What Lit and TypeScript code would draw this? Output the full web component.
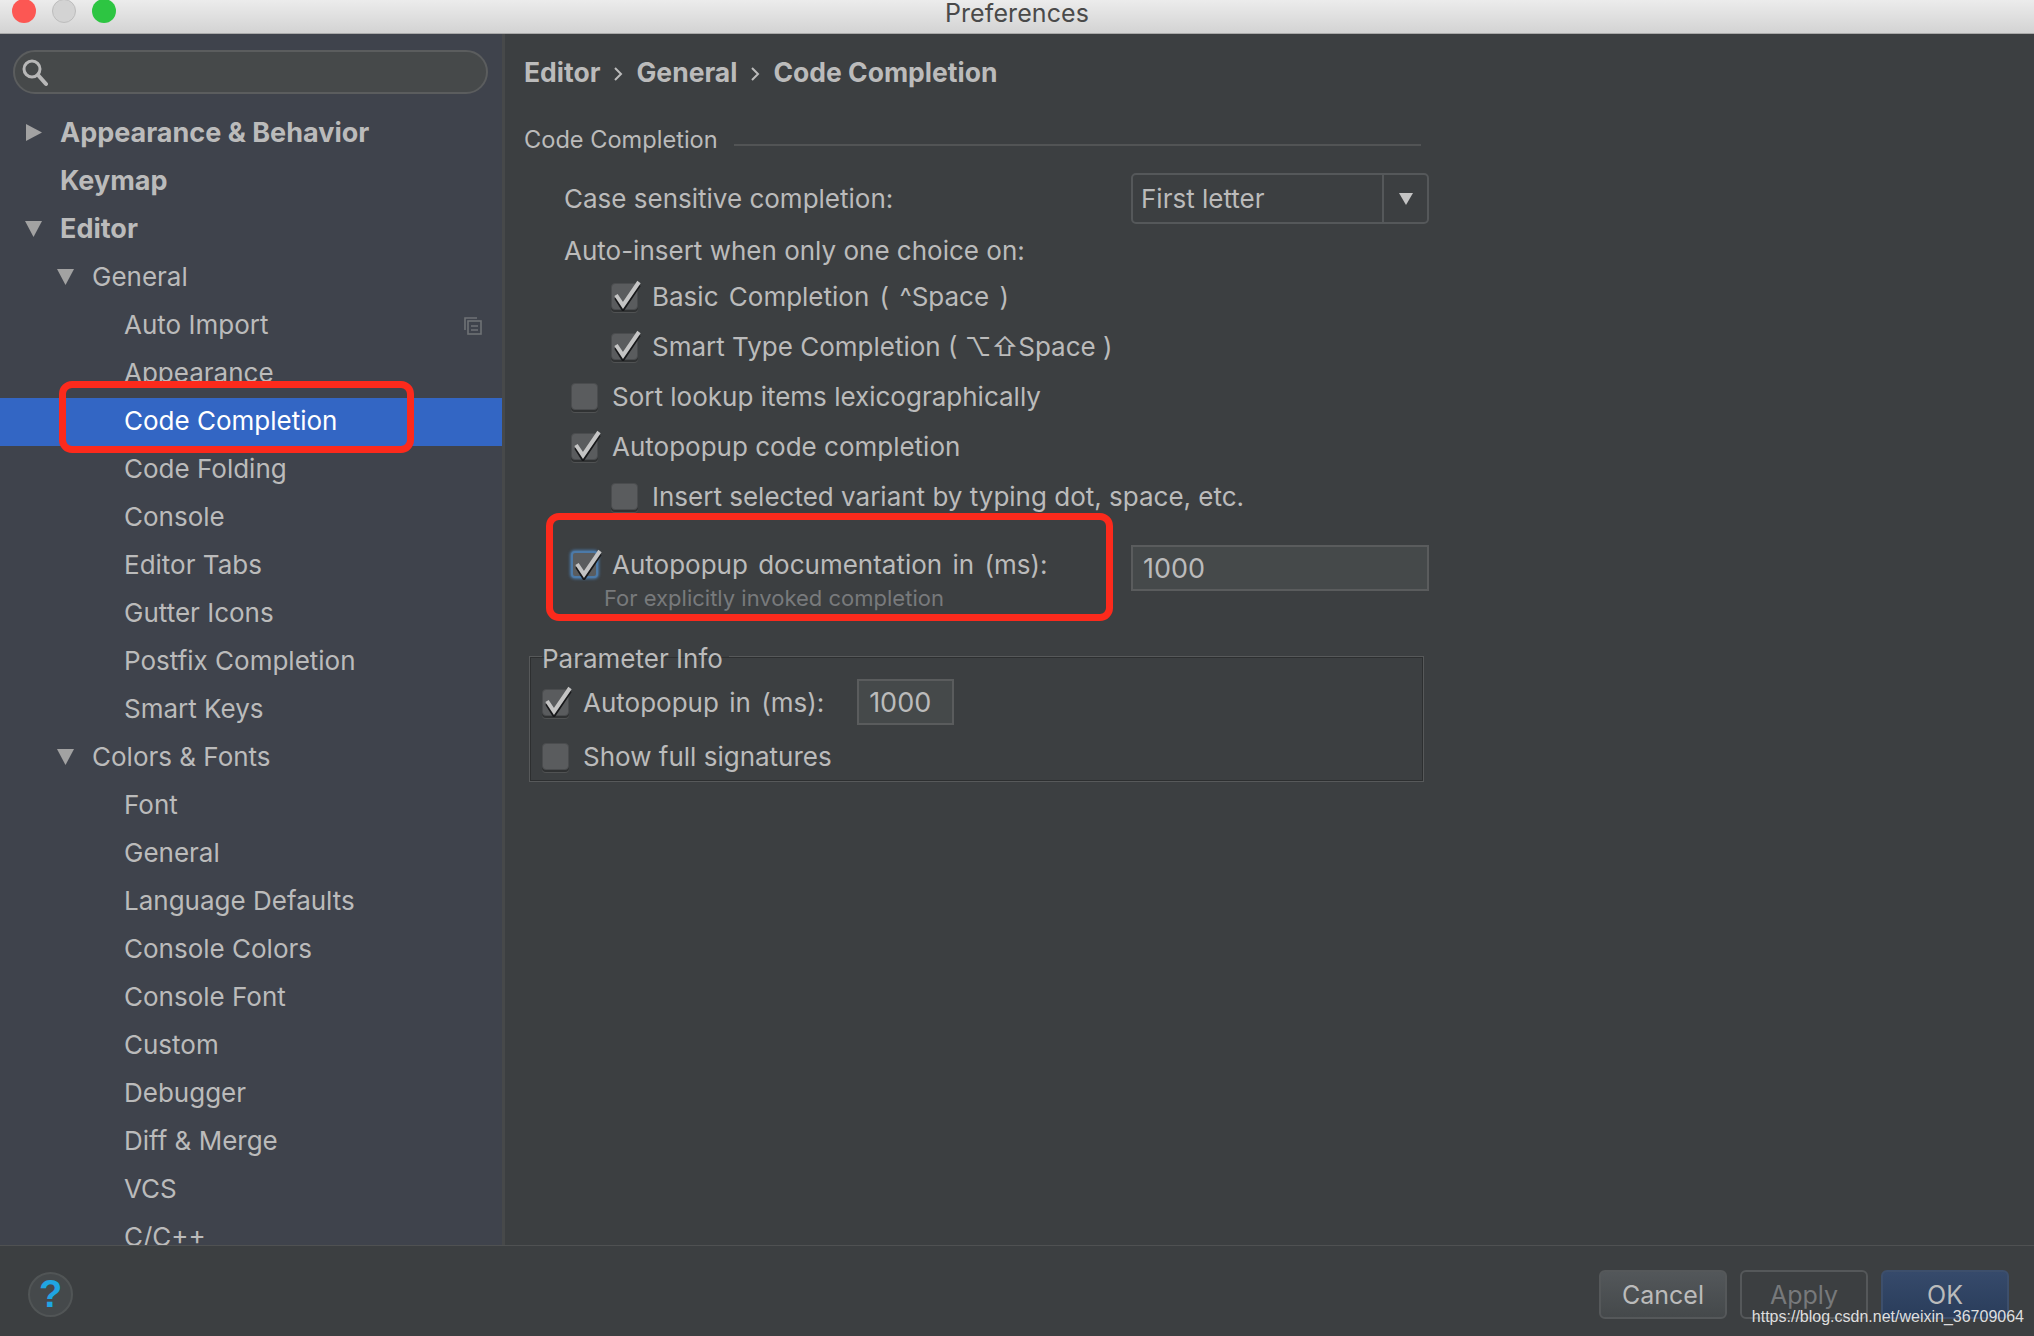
import { LitElement, html, css, svg } from "lit";
import { customElement } from "lit/decorators.js";

type Row = { t: string; lvl: number; arrow?: "r" | "d"; bold?: boolean; sel?: boolean; copy?: boolean };

const rows: Row[] = [
  { t: "Appearance & Behavior", lvl: 0, arrow: "r", bold: true },
  { t: "Keymap", lvl: 0, bold: true },
  { t: "Editor", lvl: 0, arrow: "d", bold: true },
  { t: "General", lvl: 1, arrow: "d" },
  { t: "Auto Import", lvl: 2, copy: true },
  { t: "Appearance", lvl: 2 },
  { t: "Code Completion", lvl: 2, sel: true },
  { t: "Code Folding", lvl: 2 },
  { t: "Console", lvl: 2 },
  { t: "Editor Tabs", lvl: 2 },
  { t: "Gutter Icons", lvl: 2 },
  { t: "Postfix Completion", lvl: 2 },
  { t: "Smart Keys", lvl: 2 },
  { t: "Colors & Fonts", lvl: 1, arrow: "d" },
  { t: "Font", lvl: 2 },
  { t: "General", lvl: 2 },
  { t: "Language Defaults", lvl: 2 },
  { t: "Console Colors", lvl: 2 },
  { t: "Console Font", lvl: 2 },
  { t: "Custom", lvl: 2 },
  { t: "Debugger", lvl: 2 },
  { t: "Diff & Merge", lvl: 2 },
  { t: "VCS", lvl: 2 },
  { t: "C/C++", lvl: 2 },
];

const arrowIcon = (d: "r" | "d") =>
  html`<svg class="arrow" width="18" height="18" viewBox="0 0 18 18">
    ${d === "r" ? svg`<path d="M1 0 L17 8.5 L1 17Z" fill="#a2a2a2"/>` : svg`<path d="M0 1 L17 1 L8.5 17Z" fill="#a2a2a2"/>`}
  </svg>`;

const check = (on: boolean, focus = false) =>
  html`<span class="cb ${focus ? "focus" : ""}">
    ${on
      ? html`<svg class="tick" width="30" height="34" viewBox="0 0 30 34">
          <path d="M5 19 L12 30 L28 6" fill="none" stroke="#17181a" stroke-width="4" transform="translate(0 1.8)"/>
          <path d="M5 18 L12 28.5 L28 5" fill="none" stroke="#c4c4c4" stroke-width="4"/>
        </svg>`
      : ""}
  </span>`;

@customElement("app-root")
export class AppRoot extends LitElement {
  static styles = css`
    :host {
      display: flex;
      flex-direction: column;
      position: relative;
      width: 2034px;
      height: 1336px;
      overflow: hidden;
      background: #3c3f41;
      font-family: Inter, "Liberation Sans", sans-serif;
      font-size: 26px;
      color: #bbbbbb;
    }
    .title {
      flex: none;
      height: 33px;
      box-sizing: content-box;
      position: relative;
      display: flex;
      align-items: flex-start;
      justify-content: center;
      line-height: 26px;
      background: linear-gradient(#ececec, #d3d3d3);
      border-bottom: 1px solid #a9a9a9;
      color: #4a4a4a;
      font-size: 25px;
      letter-spacing: 0.1px;
    }
    .lights {
      position: absolute;
      left: 12px;
      top: -1px;
      display: flex;
      gap: 16px;
    }
    .light {
      width: 24px;
      height: 24px;
      border-radius: 50%;
    }
    .red { background: #fc5753; }
    .grey { background: #d3d3d3; border: 1px solid #bdbdbd; box-sizing: border-box; }
    .green { background: #2dc542; }
    .body {
      flex: none;
      height: 1211px;
      display: flex;
      overflow: hidden;
    }
    .side {
      flex: none;
      width: 502px;
      background: #3f434c;
      border-right: 3px solid #47494a;
      overflow: hidden;
    }
    .search {
      margin: 16px 0 0 13px;
      width: 475px;
      height: 44px;
      box-sizing: border-box;
      border: 2px solid #5b5d5e;
      border-radius: 22px;
      background: #46494a;
      display: flex;
      align-items: center;
      padding-left: 5px;
    }
    .list {
      margin-top: 16px;
    }
    .row {
      height: 48px;
      box-sizing: border-box;
      padding-bottom: 3px;
      display: flex;
      align-items: center;
      position: relative;
    }
    .row.sel {
      background: #3366c4;
      color: #ffffff;
    }
    .row.bold { font-weight: 700; font-size: 27px; }
    .slot {
      flex: none;
      display: flex;
      align-items: center;
      justify-content: flex-start;
      width: 35px;
    }
    .lvl0 { padding-left: 25px; }
    .lvl1 { padding-left: 57px; }
    .lvl2 { padding-left: 124px; }
    .copy { margin-left: auto; margin-right: 20px; margin-top: 2px; }
    .main {
      flex: 1;
      padding: 14px 0 0 19px;
      min-width: 0;
    }
    .crumb {
      height: 48px;
      display: flex;
      align-items: center;
      font-weight: 700;
      font-size: 26.5px;
      gap: 13px;
    }
    .crumb svg { margin-top: 3px; }
    .section {
      margin-top: 19px;
      height: 48px;
      display: flex;
      align-items: center;
      width: 897px;
      gap: 16px;
      font-size: 23.6px;
    }
    .section i {
      flex: 1;
      height: 2px;
      background: #525455;
      margin-top: 12px;
    }
    .combo-row {
      margin-top: 10px;
      height: 51px;
      display: flex;
      align-items: center;
      padding-left: 40px;
    }
    .combo-row > span {
      flex: none;
      width: 567px;
    }
    .combo {
      flex: none;
      width: 298px;
      height: 51px;
      box-sizing: border-box;
      border: 2px solid #55585a;
      border-radius: 5px;
      display: flex;
      align-items: stretch;
    }
    .combo span {
      flex: 1;
      padding-left: 8px;
      display: flex;
      align-items: center;
    }
    .combo b {
      flex: none;
      width: 43px;
      border-left: 2px solid #55585a;
      display: flex;
      align-items: center;
      justify-content: center;
    }
    .plain {
      height: 48px;
      display: flex;
      align-items: center;
      padding-left: 40px;
    }
    .plain.first { margin-top: 5px; height: 42px; }
    .ck {
      height: 50px;
      display: flex;
      align-items: center;
      gap: 14px;
    }
    .ws { word-spacing: 3px; }
    .ind1 { padding-left: 47px; }
    .ind2 { padding-left: 87px; }
    .cb {
      flex: none;
      width: 27px;
      height: 27px;
      box-sizing: border-box;
      border-radius: 4px;
      background: #5a5c5e;
      border: 1px solid #4a4c4e;
      box-shadow: 0 2px 0 #303233, 0 3px 0 #505253;
      position: relative;
    }
    .cb.focus {
      border: 2px solid #4c7aa8;
      box-shadow: 0 0 3px 1px #4c7aa8;
    }
    .tick {
      position: absolute;
      left: -1px;
      top: -7px;
    }
    .doc {
      display: flex;
      margin-top: 18px;
      align-items: flex-start;
    }
    .doc-l {
      width: 607px;
      flex: none;
    }
    .doc-l .ck { height: 50px; }
    .hint {
      margin: -3px 0 0 80px;
      height: 24px;
      line-height: 24px;
      font-size: 22px;
      color: #787a7c;
    }
    .field {
      box-sizing: border-box;
      border: 2px solid #5a5c5d;
      background: #45494a;
      display: flex;
      align-items: center;
      color: #bbbbbb;
      font-size: 27px;
    }
    .doc .field {
      margin-top: 6px;
      width: 298px;
      height: 46px;
      padding-left: 10px;
    }
    fieldset {
      margin: 28px 0 0 5px;
      padding: 0 0 0 12px;
      width: 895px;
      height: 144px;
      box-sizing: border-box;
      border: 1px solid #57595a;
      box-shadow: inset 0 0 0 1px #2d2f30;
      min-width: 0;
    }
    legend {
      padding: 6px 6px 0 0;
      margin-left: 0;
      line-height: 30px;
    }
    .pk {
      display: flex;
      align-items: center;
      gap: 14px;
      height: 48px;
    }
    .pk.one { margin-top: 4px; }
    .pk.two { margin-top: 6px; }
    .pk .field {
      margin-left: 19px;
      width: 97px;
      height: 46px;
      padding-left: 10px;
    }
    .foot {
      flex: none;
      height: 91px;
      box-sizing: border-box;
      border-top: 1px solid #4f5152;
      display: flex;
      padding: 26px 25px 0 28px;
      align-items: flex-start;
      gap: 13px;
    }
    .help {
      width: 45px;
      height: 45px;
      margin-right: auto;
      box-sizing: border-box;
      border-radius: 50%;
      border: 2px solid #515556;
      background: #45494b;
      display: flex;
      align-items: center;
      justify-content: center;
      color: #1fa5e3;
      font-weight: 800;
      font-size: 38px;
      font-family: "Liberation Sans", sans-serif;
    }
    .btn {
      width: 128px;
      height: 49px;
      margin-top: -2px;
      box-sizing: border-box;
      border-radius: 6px;
      border: 2px solid #55585a;
      display: flex;
      align-items: center;
      justify-content: center;
      font-size: 25px;
    }
    .cancel { background: linear-gradient(#53575a, #45494b); }
    .apply { color: #77797b; }
    .ok { background: linear-gradient(#364a6b, #2a3d5b); border-color: #3d4f6c; }
    .mark {
      position: absolute;
      right: 10px;
      top: 1306px;
      font-family: "Liberation Sans", sans-serif;
      font-size: 16px;
      line-height: 22px;
      color: #dedede;
    }
    .note {
      position: absolute;
      box-sizing: border-box;
      border: 7px solid #fc2a1c;
      border-radius: 13px;
      pointer-events: none;
    }
    .n1 { left: 59px; top: 381px; width: 355px; height: 72px; }
    .n2 { left: 546px; top: 513px; width: 567px; height: 108px; }
  `;

  render() {
    const sep = html`<svg width="10" height="18" viewBox="0 0 10 18"><path d="M2 3 L8 9 L2 15" fill="none" stroke="#bbb" stroke-width="2"/></svg>`;
    return html`
      <div class="title">
        <div class="lights"><div class="light red"></div><div class="light grey"></div><div class="light green"></div></div>
        Preferences
      </div>
      <div class="body">
        <div class="side">
          <div class="search">
            <svg width="28" height="30" viewBox="0 0 28 30">
              <circle cx="12" cy="12" r="8" fill="none" stroke="#b8b8b8" stroke-width="3"/>
              <path d="M18 18 L26 27" stroke="#b8b8b8" stroke-width="4" stroke-linecap="round"/>
            </svg>
          </div>
          <div class="list">
            ${rows.map(
              (r) => html`<div class="row lvl${r.lvl} ${r.bold ? "bold" : ""} ${r.sel ? "sel" : ""}">
                ${r.lvl < 2 ? html`<span class="slot">${r.arrow ? arrowIcon(r.arrow) : ""}</span>` : ""}
                <span>${r.t}</span>
                ${r.copy
                  ? html`<svg class="copy" width="18" height="18" viewBox="0 0 18 18" fill="none" stroke="#6f7275" stroke-width="1.6">
                      <path d="M13 1 H1 V13"/><rect x="4" y="4" width="13" height="13"/><path d="M7 9 H14 M7 13 H14"/>
                    </svg>`
                  : ""}
              </div>`
            )}
          </div>
        </div>
        <div class="main">
          <div class="crumb"><span>Editor</span>${sep}<span>General</span>${sep}<span>Code Completion</span></div>
          <div class="section"><span>Code Completion</span><i></i></div>
          <div class="combo-row">
            <span>Case sensitive completion:</span>
            <div class="combo">
              <span>First letter</span>
              <b><svg width="16" height="14" viewBox="0 0 16 14"><path d="M1 1 H15 L8 13Z" fill="#c4c4c4"/></svg></b>
            </div>
          </div>
          <div class="plain first">Auto-insert when only one choice on:</div>
          <div class="ck ind2">${check(true)}<span class="ws">Basic Completion ( ^Space )</span></div>
          <div class="ck ind2">${check(true)}<span>Smart Type Completion ( ⌥⇧Space )</span></div>
          <div class="ck ind1">${check(false)}<span>Sort lookup items lexicographically</span></div>
          <div class="ck ind1">${check(true)}<span>Autopopup code completion</span></div>
          <div class="ck ind2">${check(false)}<span>Insert selected variant by typing dot, space, etc.</span></div>
          <div class="doc">
            <div class="doc-l">
              <div class="ck ind1">${check(true, true)}<span class="ws">Autopopup documentation in (ms):</span></div>
              <div class="hint">For explicitly invoked completion</div>
            </div>
            <div class="field">1000</div>
          </div>
          <fieldset>
            <legend>Parameter Info</legend>
            <div class="pk one">${check(true)}<span class="ws">Autopopup in (ms):</span><div class="field">1000</div></div>
            <div class="pk two">${check(false)}<span>Show full signatures</span></div>
          </fieldset>
        </div>
      </div>
      <div class="foot">
        <div class="help">?</div>
        <div class="btn cancel">Cancel</div>
        <div class="btn apply">Apply</div>
        <div class="btn ok">OK</div>
      </div>
      <div class="note n1"></div>
      <div class="note n2"></div>
      <div class="mark">https://blog.csdn.net/weixin_36709064</div>
    `;
  }
}
